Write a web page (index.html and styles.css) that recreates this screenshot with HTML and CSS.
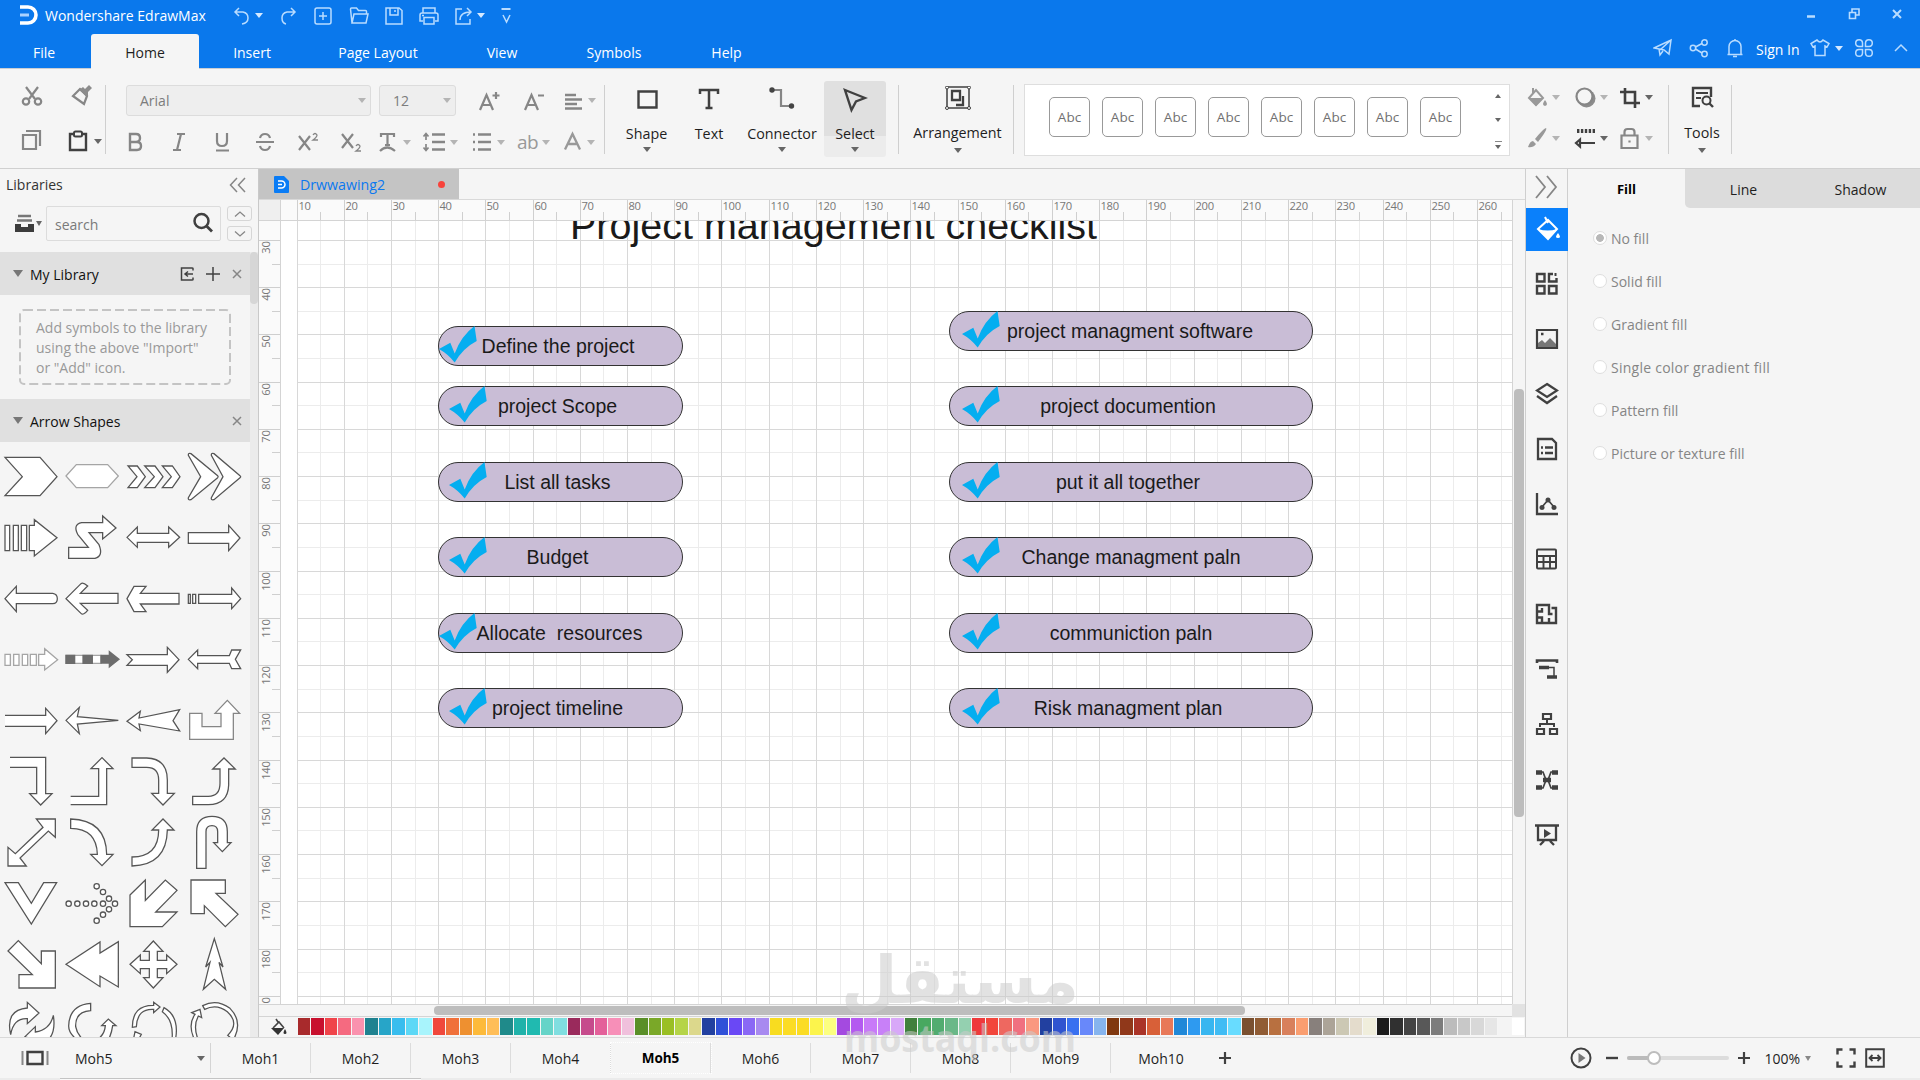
FILE: index.html
```
<!DOCTYPE html>
<html lang="en">
<head>
    <meta charset="utf-8">
    <title>Wondershare EdrawMax</title>
    <link rel="stylesheet" href="styles.css">
</head>
<body>
    <header class="titlebar">
        <div class="title-row">
            <div class="brand">
                <svg class="logo" width="18" height="20" viewBox="0 0 18 20"><path d="M0 2h8a8 8 0 0 1 0 16H0" stroke="#fff" stroke-width="3.6"/><path d="M0 10h9" stroke="#a9d2ff" stroke-width="3"/></svg>
                <span>Wondershare EdrawMax</span>
            </div>
            <div class="quick">
                <span class="drop"><svg width="20" height="20" viewBox="0 0 20 20"><path d="M7 2L3 6l4 4M3 6h8q5 1 5 6t-6 6"/></svg><i class="caret"></i></span>
                <svg width="20" height="20" viewBox="0 0 20 20"><path d="M13 2l4 4-4 4M17 6H9q-5 1-5 6t4 6"/></svg>
                <svg width="20" height="20" viewBox="0 0 20 20"><rect x="2" y="2" width="16" height="16" rx="2"/><path d="M10 6v8M6 10h8"/></svg>
                <svg width="20" height="20" viewBox="0 0 20 20"><path d="M3 17L1.500 3q0-1 1-1h5l2 2.500h7q1 0 1 1V8M3 17L5 8h14l-2 9z"/></svg>
                <svg width="20" height="20" viewBox="0 0 20 20"><path d="M2 2h13l3 2.500V18H2zM6 2v7h8V2M11 4v2"/></svg>
                <svg width="20" height="20" viewBox="0 0 20 20"><path d="M4 7V2h12v5M4 15H1V9q0-2 2-2h14q2 0 2 2v6h-3M5 11.500h10V18H5zM3 9.500h2"/></svg>
                <span class="drop"><svg width="20" height="20" viewBox="0 0 20 20"><path d="M8 3H2v15h14v-5M6 14q0-8 11-8M13 2l4 4-4 4"/></svg><i class="caret"></i></span>
                <svg class="customize" width="20" height="20" viewBox="0 0 20 20"><path d="M5.500 3h9" stroke-width="2"/><path d="M7 9l3.500 7L14 9"/></svg>
            </div>
            <div class="window-buttons">
                <svg width="12" height="12" viewBox="0 0 12 12"><path d="M2 8.500h8" stroke-width="2.500"/></svg>
                <svg width="12" height="12" viewBox="0 0 12 12"><path d="M1.500 4.500h6v6h-6zM4 4V1h7v6H8" stroke-width="1.600"/></svg>
                <svg width="12" height="12" viewBox="0 0 12 12"><path d="M2 2l8 8M10 2l-8 8" stroke-width="2"/></svg>
            </div>
        </div>
        <div class="menu-row">
            <nav class="menu">
                <a class="m-file">File</a><a class="m-home active">Home</a><a class="m-insert">Insert</a><a class="m-page">Page Layout</a><a class="m-view">View</a><a class="m-symbols">Symbols</a><a class="m-help">Help</a>
            </nav>
            <div class="account">
                <svg width="20" height="20" viewBox="0 0 20 20"><path d="M1 10L18 2l-2 14-5-4zM6 11l1 6 3-4M7 12l11-10"/></svg>
                <svg width="20" height="20" viewBox="0 0 20 20"><circle cx="4" cy="10" r="2.700"/><circle cx="15.500" cy="4.500" r="2.700"/><circle cx="15.500" cy="16" r="2.700"/><path d="M6.500 9L13 5.500M6.500 11L13 15"/></svg>
                <svg width="20" height="20" viewBox="0 0 20 20"><path d="M4 16V8.500a6 6 0 0 1 12 0V16M2.500 16.500h15M10 1v2M8 18.500h4"/></svg>
                <span>Sign In</span>
                <svg width="20" height="20" viewBox="0 0 20 20"><path d="M7 2L1 5.500 3 9l2-1v9.500h10V8l2 1 2-3.500L13 2q-3 4-6 0z"/></svg>
                <i class="caret"></i>
                <svg class="clover" width="20" height="20" viewBox="0 0 20 20"><path d="M8.500 8.500H5A3.400 3.400 0 1 1 8.500 5zM11.500 8.500V5A3.400 3.400 0 1 1 15 8.500zM8.500 11.500V15A3.400 3.400 0 1 1 5 11.500zM11.500 11.500H15A3.400 3.400 0 1 1 11.500 15z"/></svg>
                <svg class="collapse" width="14" height="14" viewBox="0 0 14 14"><path d="M1 10l6-6 6 6"/></svg>
            </div>
        </div>
    </header>

    <section class="ribbon">
        <div class="group clipboard">
            <svg class="gray" width="22" height="22" viewBox="0 0 22 22"><path d="M5 2l9 12M17 2L8 14"/><circle cx="5" cy="16.500" r="3.200"/><circle cx="17" cy="16.500" r="3.200"/></svg>
            <svg class="gray" width="22" height="22" viewBox="0 0 22 22"><path d="M2 11l7-7 7 7-3 8z"/><path d="M8 5l4-3 2 2 4-4 3 3-4 4v5z" fill="#8c8c8c" stroke="none"/></svg>
            <svg class="gray" width="22" height="22" viewBox="0 0 22 22"><path d="M2 6h13v14H2zM5 2h14v15"/></svg>
            <span class="drop"><svg class="dark" width="20" height="22" viewBox="0 0 20 22"><path d="M6 4H2v16h16V4h-4" stroke-width="2.400"/><rect x="6" y="1.500" width="8" height="5" rx="1.500"/></svg><i class="caret dk"></i></span>
        </div>
        <div class="group font">
            <div class="font-row">
                <div class="select family"><span>Arial</span><i class="caret"></i></div>
                <div class="select size"><span>12</span><i class="caret"></i></div>
                <svg class="gray" width="22" height="22" viewBox="0 0 22 22"><path d="M2 20L8.500 5 15 20M4.500 15h8M18 2v7M14.500 5.500h7" stroke-width="2.200"/></svg>
                <svg class="gray" width="22" height="22" viewBox="0 0 22 22"><path d="M2 20L8.500 5 15 20M4.500 15h8M15 5.500h6" stroke-width="2.200"/></svg>
                <span class="drop"><svg class="gray" width="20" height="22" viewBox="0 0 20 22"><path d="M2 5h11M2 9.500h17M2 14h12M2 18.500h17" stroke-width="2.400"/></svg><i class="caret"></i></span>
            </div>
            <div class="style-row">
                <svg class="gray" width="22" height="22" viewBox="0 0 22 22"><path d="M6 3h6q4 0 4 4t-4 4H6zM6 11h7q4 0 4 4t-4 4H6z" stroke-width="2.400"/></svg>
                <svg class="gray" width="22" height="22" viewBox="0 0 22 22"><path d="M9 3h8M5 19h8M13 3L9 19"/></svg>
                <svg class="gray" width="22" height="22" viewBox="0 0 22 22"><path d="M5 2v8q0 5 5 5t5-5V2M4 19.500h13"/></svg>
                <svg class="gray" width="22" height="22" viewBox="0 0 22 22"><path d="M15 7q-1-4-5-4T5 7M1 11h18M5 15q1 4 5 4t5-4"/></svg>
                <svg class="gray" width="22" height="22" viewBox="0 0 22 22"><path d="M2 5l11 14M13 5L2 19"/><path d="M16 4q2-3 4 0 0 2-4 5h5" stroke-width="1.300"/></svg>
                <svg class="gray" width="22" height="22" viewBox="0 0 22 22"><path d="M2 3l11 14M13 3L2 17"/><path d="M16 15q2-3 4 0 0 2-4 5h5" stroke-width="1.300"/></svg>
                <span class="drop"><svg class="gray" width="22" height="22" viewBox="0 0 22 22"><path d="M4 6V3h13v3M10.500 3v11M8 14h5M3 20q7-7 15 0"/></svg><i class="caret"></i></span>
                <span class="drop"><svg class="gray" width="24" height="22" viewBox="0 0 24 22"><path d="M4 3v6M4 13v6M1.500 5.500L4 2.500l2.500 3M1.500 16.500l2.500 3 2.500-3" stroke-width="1.700"/><path d="M10 3.500h13M10 11h13M10 18.500h13" stroke-width="2.400"/></svg><i class="caret"></i></span>
                <span class="drop"><svg class="gray" width="22" height="22" viewBox="0 0 22 22"><path d="M2 3.500h2M2 11h2M2 18.500h2M7 3.500h13M7 11h13M7 18.500h13" stroke-width="2.400"/></svg><i class="caret"></i></span>
                <span class="drop"><b class="ab">ab</b><i class="caret"></i></span>
                <span class="drop"><svg class="light" width="22" height="22" viewBox="0 0 22 22"><path d="M4 18.500L11.500 3 19 18.500M7 13h9" stroke-width="2.300"/></svg><i class="caret"></i></span>
            </div>
        </div>
        <div class="group modes">
            <div class="big shape"><svg class="dark" width="26" height="28" viewBox="0 0 26 28"><path d="M4.500 5.500h18v16h-18z" stroke-width="2.400"/></svg><span>Shape</span><i class="caret dk"></i></div>
            <div class="big text"><svg class="dark" width="26" height="28" viewBox="0 0 26 28"><path d="M4 8V4h18v4M13 4v18M9.500 22h7" stroke-width="2.500"/></svg><span>Text</span></div>
            <div class="big connector"><svg class="gray" width="26" height="28" viewBox="0 0 26 28"><path d="M3 4h9v16h9"/><circle cx="3" cy="4" r="2.700" fill="#444" stroke="none"/><circle cx="22.500" cy="20" r="2.700" fill="#444" stroke="none"/></svg><span>Connector</span><i class="caret dk"></i></div>
            <div class="big chosen"><svg class="dark" width="26" height="28" viewBox="0 0 26 28"><path d="M3 4l20 8-9 3.500L9.500 24z" stroke-width="2.400"/></svg><span>Select</span><i class="caret dk"></i></div>
        </div>
        <div class="group arrangement">
            <div class="big"><svg class="dark" width="26" height="28" viewBox="0 0 26 28"><path d="M2 1h22v21H2z" stroke-width="1.500"/><path d="M7 5h8v9H7zM18 10v9h-7" stroke-width="2.300"/><g fill="#fff" stroke-width="1"><circle cx="2" cy="1.500" r="1.500"/><circle cx="24" cy="1.500" r="1.500"/><circle cx="2" cy="22" r="1.500"/><circle cx="24" cy="22" r="1.500"/></g></svg><span>Arrangement</span><i class="caret dk"></i></div>
        </div>
        <div class="gallery">
            <div class="swatch">Abc</div><div class="swatch">Abc</div><div class="swatch">Abc</div><div class="swatch">Abc</div><div class="swatch">Abc</div><div class="swatch">Abc</div><div class="swatch">Abc</div><div class="swatch">Abc</div>
            <div class="gallery-nav"><i class="caret dk up"></i><i class="caret dk"></i><div class="more"><i class="caret dk"></i></div></div>
        </div>
        <div class="group effects">
            <span class="drop"><svg class="light" width="22" height="22" viewBox="0 0 22 22"><path d="M7 2v5M3 12l7-8 7 8-7 7z"/><path d="M3 12h14l-7 8zM19 14q4 5 0 6-4-1 0-6" fill="#999" stroke="none"/></svg><i class="caret"></i></span>
            <span class="drop"><svg class="gray" width="22" height="22" viewBox="0 0 22 22"><circle cx="12.500" cy="12.500" r="9" fill="#8c8c8c" stroke="none"/><circle cx="10.500" cy="10.500" r="8" fill="#f5f5f5"/></svg><i class="caret"></i></span>
            <span class="drop"><svg class="dark" width="22" height="22" viewBox="0 0 22 22"><path d="M6 2v15h15M1 6h15v16" stroke-width="2.600"/></svg><i class="caret dk"></i></span>
            <span class="drop"><svg class="light" width="22" height="22" viewBox="0 0 22 22"><path d="M20 1q2 1-8 14l-3-3Q17 2 20 1M7 14l3 3q-3 4-8 3 2-6 5-6" fill="#999" stroke="none"/></svg><i class="caret"></i></span>
            <span class="drop"><svg class="dark" width="22" height="22" viewBox="0 0 22 22"><path d="M3 4h18" stroke-width="4" stroke-dasharray="2.400 1.500"/><path d="M5 16h16M6 12.500L2 16l4 3.500z" stroke-width="2.200"/></svg><i class="caret dk"></i></span>
            <span class="drop"><svg class="gray" width="22" height="22" viewBox="0 0 22 22"><path d="M2.500 8.500h16V21h-16zM5.500 8V5q0-3 3-3h4q3 0 3 3v3M10.500 13.500v2"/></svg><i class="caret"></i></span>
        </div>
        <div class="group tools">
            <div class="big"><svg class="dark" width="26" height="28" viewBox="0 0 26 28"><path d="M11 20H4V2h18v9" stroke-width="2.400"/><path d="M7 7h12M7 12h5"/><circle cx="17.500" cy="14.500" r="4"/><path d="M20 17l4 4" stroke-width="2.400"/></svg><span>Tools</span><i class="caret dk"></i></div>
        </div>
    </section>

    <main class="workspace">
        <aside class="libraries">
            <div class="lib-title"><span>Libraries</span><svg class="gray" width="17" height="16" viewBox="0 0 17 16"><path d="M8 1L1.500 8 8 15M16 1L9.500 8l6.500 7" stroke-width="1.500"/></svg></div>
            <div class="lib-search">
                <span class="drop"><svg width="19" height="19" viewBox="0 0 19 19"><path d="M3 2h13M2 6.500h15" stroke="#777" stroke-width="2.500"/><path d="M0 10h6v3h7v-3h6v8H0z" fill="#3c3c3c"/></svg><i class="caret dk"></i></span>
                <div class="search-box"><span>search</span><svg class="dark" width="20" height="21" viewBox="0 0 20 21"><circle cx="8.500" cy="9" r="7" stroke-width="2.500"/><path d="M13.500 14l5.500 5.500" stroke-width="2.800"/></svg></div>
                <div class="steps">
                    <div><svg class="gray" width="12" height="6" viewBox="0 0 12 6"><path d="M1 5.500l5-4.500 5 4.500" stroke-width="1.300"/></svg></div>
                    <div><svg class="gray" width="12" height="6" viewBox="0 0 12 6"><path d="M1 .5L6 5 11 .5" stroke-width="1.300"/></svg></div>
                </div>
            </div>
            <div class="lib-scroll">
                <div class="lib-body">
                    <div class="lib-head"><i class="fold"></i><span>My Library</span>
                        <svg class="dark thin" width="14" height="14" viewBox="0 0 14 14"><path d="M13 3.500V1.500q0-.5-1-.5H1.500v12H12q1 0 1-.5v-2M13 7H5.500M8 4.500L5 7l3 2.500"/></svg>
                        <svg class="dark thin" width="14" height="14" viewBox="0 0 14 14"><path d="M7 0v14M0 7h14"/></svg>
                        <svg class="gray thin" width="10" height="10" viewBox="0 0 10 10"><path d="M1 1l8 8M9 1L1 9"/></svg>
                    </div>
                    <div class="lib-hint-wrap"><svg class="hint-frame" width="212" height="76"><rect x="1" y="1" width="210" height="74" rx="4"/></svg><p class="lib-hint">Add symbols to the library<br>using the above "Import"<br>or "Add" icon.</p></div>
                    <div class="lib-head"><i class="fold"></i><span>Arrow Shapes</span>
                        <svg class="gray thin" width="10" height="10" viewBox="0 0 10 10"><path d="M1 1l8 8M9 1L1 9"/></svg>
                    </div>
                    <div class="arrows">
                        <svg viewBox="0 48 183 183"><path d="M15 82H120L171 140 120 197H15L67 140z"/></svg>
                        <svg class="pale" viewBox="183 48 183 183"><path d="M198 138L229 104H323L355 138 323 173H229z"/></svg>
                        <svg viewBox="366 48 183 183"><path d="M384 108H412L436 140 412 173H384L411 140zM434 108h31l24 32-24 33h-31l29-33zM487 108h30l23 32-23 33h-30l27-33z"/></svg>
                        <svg viewBox="549 48 183 183"><path d="M565 76Q564 68 573 71L653 137Q656 140 653 143L573 209Q563 211 565 203L602 140zM634 76Q633 68 642 71L720 137Q724 140 720 143L642 209Q632 211 634 203L669 140z"/></svg>

                        <svg viewBox="0 231 183 183"><path d="M15 286h14v76h-14zM40 286h15v76h-15zM64 286h16v76h-16zM88 286h15v-17l68 54-68 55v-16h-15z"/></svg>
                        <svg viewBox="183 231 183 183"><path d="M206 352H265L233 313Q218 283 245 278H308V258L348 294 308 327V308H267L297 344Q311 378 285 385H206z"/></svg>
                        <svg viewBox="366 231 183 183"><path d="M381 322L412 291V310H506V291L539 322 506 352V337H412V352z"/></svg>
                        <svg viewBox="549 231 183 183"><path d="M565 308H686V286L720 324 686 362V340H565z"/></svg>

                        <svg viewBox="0 414 183 183"><path d="M15 506L49 469V490H158Q172 492 172 506 172 520 158 521H49V545z"/></svg>
                        <svg viewBox="183 414 183 183"><path d="M198 506L243 461Q249 456 263 468L241 490H354V520H241L263 541Q250 557 243 550z"/></svg>
                        <svg viewBox="366 414 183 183"><path d="M381 506L402 469H438L421 490H537V522H421L438 545H402z"/></svg>
                        <svg viewBox="549 414 183 183"><path d="M565 493h6v27h-6zM578 493h9v27h-9zM596 493h99v-19l27 32-27 30v-16h-99z"/></svg>

                        <svg class="pale" viewBox="0 597 183 183"><path d="M15 673h16v33h-16zM41 673h16v33h-16zM67 673h16v33h-16zM91 673h18v33h-18zM116 673h18v-17l39 33-39 31v-14h-18z"/></svg>
                        <svg class="pale" viewBox="183 597 183 183"><path d="M198 676h105v24h-105z"/><path class="solid" d="M198 676h26v24h-26zM249 676h28v24h-28zM303 676h25v-11l29 23-29 23v-12h-25z"/></svg>
                        <svg viewBox="366 597 183 183"><path d="M381 674H502V652L537 689 502 727V706H381L397 689z"/></svg>
                        <svg viewBox="549 597 183 183"><path d="M565 688L593 660V677H688L695 660H722L706 688 722 716H695L688 700H593V716z"/></svg>

                        <svg viewBox="0 780 183 183"><path d="M15 856H137V835L171 872 137 911V889H15"/></svg>
                        <svg viewBox="183 780 183 183"><path d="M198 871L238 832 232 860 355 871 232 882 238 911z"/></svg>
                        <svg viewBox="366 780 183 183"><path d="M381 874L421 844 417 864 539 839 519 872 539 903 417 882 421 902z"/></svg>
                        <svg class="mid" viewBox="549 780 183 183"><path d="M569 850H606V890H663V850H645L682 811 719 850H700V928H569z"/></svg>

                        <svg viewBox="0 33 183 183"><path d="M30 52H137V161H156L122 195 89 161H110V82H30"/></svg>
                        <svg viewBox="183 33 183 183"><path d="M212 169H296V86H273L306 53 339 86H320V194H212"/></svg>
                        <svg viewBox="366 33 183 183"><path d="M396 54H440Q502 56 502 120V160H523L489 195 455 160H476V120Q476 82 440 82H396z"/></svg>
                        <svg viewBox="549 33 183 183"><path d="M578 169H625Q660 169 660 130V87H638L672 54 706 87H686V135Q684 194 625 194H578z"/></svg>

                        <svg viewBox="0 216 183 183"><path d="M109 237H166V292L145 273 60 354 79 378H24V322L46 341 129 262z"/></svg>
                        <svg viewBox="183 216 183 183"><path d="M212 237Q318 240 320 343H339L306 377 272 343H292Q290 266 212 265z"/></svg>
                        <svg viewBox="366 216 183 183"><path d="M396 351Q476 350 476 270H456L489 237 522 270H502Q500 375 396 378z"/></svg>
                        <svg viewBox="549 216 183 183"><path d="M590 385V275Q590 229 636 229 682 229 682 275V308H693L667 335 641 308H653V275Q653 257 636 257 618 257 618 275V385z"/></svg>

                        <svg viewBox="0 399 183 183"><path d="M15 428H55L94 490 131 428H170L94 552z"/></svg>
                        <svg viewBox="183 399 183 183"><circle cx="206" cy="491" r="8"/><circle cx="232" cy="491" r="8"/><circle cx="258" cy="491" r="8"/><circle cx="283" cy="491" r="8"/><circle cx="309" cy="491" r="8"/><circle cx="345" cy="491" r="8"/><circle cx="290" cy="439" r="8"/><circle cx="309" cy="456" r="8"/><circle cx="327" cy="476" r="8"/><circle cx="327" cy="508" r="8"/><circle cx="309" cy="524" r="8"/><circle cx="290" cy="542" r="8"/></svg>
                        <svg viewBox="366 399 183 183"><path d="M390 465L436 420V481L496 420 531 451 467 516H531L487 560H390z"/></svg>
                        <svg viewBox="549 399 183 183"><path d="M573 420H676V460H648L714 523 676 560 613 497V521H573z"/></svg>

                        <svg viewBox="0 582 183 183"><path d="M24 633L55 602 124 671V633H166V744H57V704H97z"/></svg>
                        <svg viewBox="183 582 183 183"><path d="M198 673L300 606V639L355 605V741L300 708V740z"/></svg>
                        <svg viewBox="366 582 183 183"><path d="M460 603L489 634H472V661H500V645L531 673 500 701V686H472V713H489L460 744 431 713H448V686H421V701L390 673 421 645V661H448V634H431z"/></svg>
                        <svg viewBox="549 582 183 183"><path d="M643 596L669 681 657 667 677 748 643 718 610 748 630 667 617 681z"/></svg>

                        <svg viewBox="0 765 183 183"><path d="M32 884Q15 810 82 804V787L117 819 82 851V836Q40 834 32 884zM75 890L106 860V876Q150 870 160 826Q170 890 130 910z"/></svg>
                        <svg viewBox="183 765 183 183"><path d="M272 790V812Q225 815 227 860Q230 880 250 900H232Q206 880 206 858Q208 795 272 790zM290 900Q314 885 316 857H305L325 837 348 857H338Q335 880 325 900z"/></svg>
                        <svg viewBox="366 765 183 183"><path d="M397 862Q397 795 461 796V787L480 801 461 818V808Q412 805 409 860zM492 803Q540 830 526 900H516Q522 840 487 815zM400 900L405 875 424 883 415 900z"/></svg>
                        <svg viewBox="549 765 183 183"><path d="M608 797Q650 775 690 805Q730 845 700 900L683 886Q720 850 682 815Q650 790 614 808zM584 900Q562 855 585 823L575 818 600 808 605 833 595 828Q578 860 595 900z"/></svg>
                    </div>
                </div>
                <div class="lib-track"><div class="lib-thumb"></div></div>
            </div>
        </aside>

        <section class="document">
            <div class="doc-tabs"><div class="doc-tab">
                <svg width="15" height="17" viewBox="0 0 15 17"><path d="M1 0h9l5 5v11q0 1-1 1H1q-1 0-1-1V1q0-1 1-1z" fill="#0a7cf5"/><path d="M4 5h3.500a3.500 3.500 0 0 1 0 7H4M4 8.500h4" fill="none" stroke="#fff" stroke-width="1.500"/></svg>
                <span>Drwwawing2</span><i class="unsaved"></i></div></div>
            <div class="sheet">
                <div class="ruler-corner"></div>
                <svg class="ruler-h" id="ruler-h" width="1231" height="20"></svg>
                <svg class="ruler-v" id="ruler-v" width="21" height="783"></svg>
                <div class="canvas">
                    <svg class="grid" id="grid" width="1231" height="783"></svg>
                    <div class="page-title">Project management checklist</div>
                    <div id="nodes"></div>
                </div>
                <div class="vscroll"><div class="vthumb"></div></div>
                <div class="hscroll"><div class="hthumb"></div></div>
                <div class="scroll-corner"></div>
            </div>
            <div class="palette">
                <div class="palette-icon"><svg width="16" height="18" viewBox="0 0 16 18"><path d="M5 1l2 3M2 10l6-6 5 6" stroke="#444" stroke-width="1.600" fill="none"/><path d="M0 10h13l-6 7zM14 11q3 5 0 5t0-5" fill="#333"/></svg></div>
                <div class="colors" id="colors"></div>
            </div>
        </section>

        <nav class="side-strip">
            <div class="strip-top"><svg class="gray" width="24" height="24" viewBox="0 0 24 24"><path d="M2 1l9 11-9 11M13 1l9 11-9 11" stroke-width="1.800"/></svg></div>
            <div class="strip-active"><svg width="24" height="26" viewBox="0 0 24 26"><path d="M9 2l3 6M2 14l10-9 9 9-9 10z" fill="none" stroke="#fff" stroke-width="2"/><path d="M2 14q10 3 19 0l-9 10zM22 18q4 5 0 5t0-5" fill="#fff"/></svg></div>
            <div class="strip-item"><svg class="dark" width="24" height="24" viewBox="0 0 24 24"><path d="M2 2h7.500v7.500H2zM2 14h7.500v7.500H2zM14 14h7.500v7.500H14zM18 2h-4v7.500h7.500V6" stroke-width="2.400"/><path d="M20.500 1v3" stroke-width="2"/></svg></div>
            <div class="strip-item"><svg class="dark" width="24" height="24" viewBox="0 0 24 24"><path d="M2 3h20v18H2z" stroke-width="2.200"/><path d="M3 20v-4l4-3 3 3 5-5 6 6v3z" fill="#777" stroke="none"/><path d="M6 7h2.500" stroke-width="2.500"/></svg></div>
            <div class="strip-item"><svg class="dark" width="24" height="24" viewBox="0 0 24 24"><path d="M12 2l10 6.500L12 15 2 8.500zM2 14l10 7 10-7" stroke-width="2.300"/></svg></div>
            <div class="strip-item"><svg class="dark" width="24" height="24" viewBox="0 0 24 24"><path d="M3 2h14l4 4v16H3zM10 10.500h8M10 16h8M6 10.500h2M6 16h2" stroke-width="2.300"/></svg></div>
            <div class="strip-item"><svg class="dark" width="24" height="24" viewBox="0 0 24 24"><path d="M2 1v21h21" stroke-width="2.300"/><path d="M7 15l6-7 6 7" stroke-width="1.700"/><g fill="#444" stroke="none"><circle cx="7" cy="15.500" r="2.500"/><circle cx="13" cy="8" r="2.500"/><circle cx="19" cy="15.500" r="2.500"/></g></svg></div>
            <div class="strip-item"><svg class="dark" width="24" height="24" viewBox="0 0 24 24"><rect x="2" y="1.500" width="19" height="19" rx="1"/><path d="M2 8h19M2 14h19M8.500 8v12M15 8v12" stroke-width="1.900"/></svg></div>
            <div class="strip-item"><svg class="dark" width="24" height="24" viewBox="0 0 24 24"><path d="M14 7V2H2v18h19V5h-4.500M2 8.500h5V5M14 7v4h3.500M14 20v-5M7 20v-5.500H2" stroke-width="2.400"/></svg></div>
            <div class="strip-item"><svg class="dark" width="24" height="24" viewBox="0 0 24 24"><path d="M2 5V2.500h20V5" stroke-width="2.600"/><path d="M4 9.500h10M12 19h10" stroke-width="3.600"/><path d="M14 9.500h5V18" stroke-width="1.500"/></svg></div>
            <div class="strip-item"><svg class="dark" width="24" height="24" viewBox="0 0 24 24"><path d="M8 1h8v5H8zM2 16h7v5H2zM15 16h7v5h-7z" stroke-width="2.200"/><path d="M12 6v5M5 14v-3h14v3" stroke-width="2"/></svg></div>
            <div class="strip-item"><svg class="dark" width="24" height="24" viewBox="0 0 24 24"><path d="M5 4h3l3 8-3 8H5M19 4h-3l-3 8 3 8h3" stroke-width="1.700"/><path d="M1 4.500h6M1 19.500h6M17 4.500h6M17 19.500h6M8 12h8" stroke-width="4.500"/></svg></div>
            <div class="strip-item"><svg class="dark" width="26" height="24" viewBox="0 0 26 24"><path d="M0 2.500h24M3 3v14h18V3M9 18l-4 4M15 18l4 4" stroke-width="2.300"/><path d="M9 6l7 4.500-7 4.500z" fill="#444" stroke="none"/></svg></div>
        </nav>

        <aside class="props">
            <div class="prop-tabs"><div class="prop-tab on">Fill</div><div class="prop-rest"><div class="prop-tab">Line</div><div class="prop-tab">Shadow</div></div></div>
            <div class="fills">
                <label class="checked"><i></i>No fill</label>
                <label><i></i>Solid fill</label>
                <label><i></i>Gradient fill</label>
                <label class="wide"><i></i>Single color gradient fill</label>
                <label><i></i>Pattern fill</label>
                <label><i></i>Picture or texture fill</label>
            </div>
        </aside>
    </main>

    <footer class="statusbar">
        <div class="page-picker">
            <svg class="dark" width="28" height="18" viewBox="0 0 28 18"><path d="M6.500 3h15v12h-15z" stroke-width="2.400"/><path d="M1.500 2v14M26.500 2v14" stroke="#888"/></svg>
            <span>Moh5</span><i class="caret dk"></i>
        </div>
        <div class="page-tabs">
            <span>Moh1</span><span>Moh2</span><span>Moh3</span><span>Moh4</span><span class="current">Moh5</span><span>Moh6</span><span>Moh7</span><span>Moh8</span><span>Moh9</span><span>Moh10</span>
        </div>
        <svg class="dark add-page" width="14" height="14" viewBox="0 0 14 14"><path d="M7 1v12M1 7h12" stroke-width="2.200"/></svg>
        <div class="zoom">
            <svg class="dark" width="22" height="22" viewBox="0 0 22 22"><circle cx="11" cy="11" r="9.500"/><path d="M8.500 6l7 5-7 5z" fill="#777" stroke="none"/></svg>
            <svg class="dark z-minus" width="14" height="14" viewBox="0 0 14 14"><path d="M1 7h12" stroke-width="2.400"/></svg>
            <div class="slider"><div class="slider-fill"></div><div class="knob"></div></div>
            <svg class="dark z-plus" width="14" height="14" viewBox="0 0 14 14"><path d="M7 1v12M1 7h12" stroke-width="2.200"/></svg>
            <span>100%</span><i class="caret"></i>
            <svg class="dark fit" width="20" height="20" viewBox="0 0 20 20"><path d="M1.500 6.500v-5h5M13.500 1.500h5v5M18.500 13.500v5h-5M6.500 18.500h-5v-5" stroke-width="2.400"/></svg>
            <svg class="dark" width="20" height="20" viewBox="0 0 20 20"><path d="M1.200 1.200h17.600v17.600H1.200z" stroke-width="2"/><path d="M5 10h10M7.500 7L4.500 10l3 3M12.500 7l3 3-3 3" stroke-width="1.800"/></svg>
        </div>
    </footer>
    <div class="bottom-edge"><div></div></div>

    <svg class="watermark" width="240" height="120" viewBox="0 0 240 120">
        <text class="wm-ar" x="120" y="60" text-anchor="middle" textLength="238" lengthAdjust="spacingAndGlyphs">مستقل</text>
        <text class="wm-en" x="4" y="109" textLength="232" lengthAdjust="spacingAndGlyphs">mostaql.com</text>
    </svg>

    <script>
        // 10 ruler units are 47.24px; the page starts at x = 16 and the "30" line at y = 19
        const step = 47.24;
        let grid = '', rulerH = '', rulerV = '';
        const minor = [], major = [];

        for (let i = 0; i < 53; i++) {
            const x = Math.floor(16 + i * step / 2 - i * 0.01) + 0.5;
            if (x > 1231) break;
            (i % 2 ? minor : major).push(`M${x} 0V783`);
            rulerH += `<path d="M${x} ${i % 2 ? 12 : 0}V20"/>`;
            if (i % 2 == 0) rulerH += `<text x="${x + 1}" y="9.5">${10 + i * 5}</text>`;
        }
        for (let i = 0; i < 34; i++) {
            const y = Math.floor(19.4 + i * step / 2) + 0.5;
            if (y > 783) break;
            (i % 2 ? minor : major).push(`M16 ${y}H1231`);
            rulerV += `<path d="M${i % 2 ? 13 : 0} ${y}H21"/>`;
            if (i % 2 == 0) rulerV += `<text transform="translate(10.5 ${y + 1}) rotate(-90)" text-anchor="end">${30 + i * 5}</text>`;
        }
        grid = `<path class="minor" d="${minor.join('')}"/><path class="major" d="${major.join('')}"/>`;
        document.getElementById('grid').innerHTML = grid;
        document.getElementById('ruler-h').innerHTML = rulerH;
        document.getElementById('ruler-v').innerHTML = rulerV;

        // [column, top, text, text shift, check mark offset]
        const nodes = [
            ['left', 105, 'Define the project', -2.5, 0],
            ['left', 165, 'project Scope', -3, 10],
            ['left', 241, 'List all tasks', -3, 10],
            ['left', 316, 'Budget', -3, 10],
            ['left', 392, 'Allocate  resources', -1, 0],
            ['left', 467, 'project timeline', -3, 10],
            ['right', 90, 'project managment software', -1, 12],
            ['right', 165, 'project documention', -3, 12],
            ['right', 241, 'put it all together', -3, 12],
            ['right', 316, 'Change managment paln', 0, 12],
            ['right', 392, 'communiction paln', 0, 12],
            ['right', 467, 'Risk managment plan', -3, 12]
        ];
        document.getElementById('nodes').innerHTML = nodes.map(n => `
            <div class="node ${n[0]}" style="top:${n[1]}px">
                <svg class="check" style="left:${n[4]}px" width="38" height="37" viewBox="0 0 38 37"><path d="M0 23L11.300 16.700 15.700 27.500Q22 10 35.500 0L37.700 15Q24 22 15.700 36.500Q9 28 0 23z"/></svg>
                <span style="margin-left:${n[3] * 2}px">${n[2]}</span>
            </div>`).join('');

        const colors = ('a82a2c c8102e f0444a f56a80 fa92ae 1f8290 27a5c8 38bdee 5cd8f6 a8f4fc f0483c f0703a ee9030 fdba3a ffbe58 ' +
            '1f8a8a 20b2aa 20bab0 66d4c8 80dee0 9a2a5c c64b8c e4609a f78fb8 f0c0dc 5a8f28 7aa828 9abf24 b5d448 dcd88c ' +
            '2240a0 3050d8 6a48f5 8a68f5 a88af0 f8dc20 fbdc24 fbdc24 fcf44c fcff80 a44ae0 b45af0 c87af8 c880f8 d8a8f8 ' +
            '40803c 48a860 52ac70 6ab888 94d0b0 ee3a3c f2463c ee6860 f07080 fa9880 2240a0 3054d0 3870f0 6888fa 86b4ee ' +
            '80380f 90381a aa3428 d86038 e87858 2088d8 2e9af0 38b6f0 40bcf4 68dcff 7a5030 905c34 b87040 d8805c fa9e70 ' +
            '88807c aca498 ccc8b4 e4dccc f0eedc 1c1c1c 303030 444444 585858 7c7c7c bcbcbc c8c8c8 d8d8d8 e6e6e6 f4f4f4 ffffff').split(' ');
        document.getElementById('colors').innerHTML = colors.map(c => `<i style="background:#${c}"></i>`).join('');
    </script>
</body>
</html>
```
FILE: styles.css
```
* { box-sizing: border-box; }
body { margin: 0; width: 1920px; height: 1080px; overflow: hidden; background: #f5f5f5; font: 14px "Open Sans", "Noto Sans", sans-serif; color: #1e1e1e; display: flex; flex-direction: column; position: relative; }
svg { flex: none; display: block; fill: none; }
span { white-space: nowrap; }

.gray { stroke: #868686; stroke-width: 2.2; }
.light { stroke: #999; stroke-width: 2; }
.dark { stroke: #404040; stroke-width: 2; }
.thin { stroke-width: 1.5; }
.caret { flex: none; width: 0; height: 0; border: 4.500px solid transparent; border-top: 5px solid #b4b4b4; border-bottom: 0; }
.caret.dk { border-top-color: #666; }
.drop { display: flex; align-items: center; gap: 3px; }

/* title bar */
.titlebar { height: 69px; background: #0a78ec; border-bottom: 1px solid #c9ced4; color: #fff; }
.titlebar svg { stroke: #b9dcff; stroke-width: 1.5; }
.titlebar .caret { border-top-color: #d5e9ff; }
.title-row { height: 34px; display: flex; align-items: flex-start; padding: 4px 17px 0 20px; }
.brand { width: 212px; display: flex; gap: 7px; align-items: center; height: 22px; }
.quick { display: flex; gap: 15.200px; height: 23px; align-items: center; }
.customize { margin-left: -4px; }
.window-buttons { margin-left: auto; display: flex; gap: 31px; padding-top: 4px; }
.menu-row { display: flex; height: 34px; }
.menu { display: flex; }
.menu a { display: flex; align-items: center; justify-content: center; padding-top: 2px; height: 34px; }
.menu .active { background: #f5f5f5; color: #1e1e1e; border-radius: 3px 3px 0 0; height: 35px; }
.m-file { width: 88px; margin-right: 3px; }
.m-home { width: 108px; }
.m-insert { width: 106px; }
.m-page { width: 146px; }
.m-view { width: 102px; }
.m-symbols { width: 122px; }
.m-help { width: 103px; }
.account { margin-left: auto; display: flex; align-items: center; height: 28px; padding-right: 12px; }
.account svg { margin-right: 16px; }
.account svg:nth-child(3) { margin-right: 11px; }
.account span { width: 54px; padding-top: 3px; }
.account svg:nth-of-type(4) { margin-right: 5px; }
.account .clover { margin: 0 20px 0 11px; }
.account .collapse { margin: 0; }

/* ribbon */
.ribbon { height: 100px; border-bottom: 1px solid #d0d0d0; display: flex; }
.group { height: 69px; margin-top: 16px; border-right: 1px solid #cfcfcf; }
.clipboard { width: 106px; display: grid; grid-template-columns: 50px 50px; grid-template-rows: 24px 24px; row-gap: 20px; padding-left: 21px; }
.clipboard .drop { margin-left: -3px; }
.clipboard .drop .caret { margin-left: 3px; }
.font { width: 499px; }
.font-row { display: flex; align-items: center; height: 31px; padding-left: 20px; }
.select { height: 31px; border: 1px solid #dcdcdc; border-radius: 3px; background: #eee; color: #7c7c7c; display: flex; align-items: center; justify-content: space-between; padding: 0 4px 0 13px; }
.family { width: 245px; margin-right: 8px; }
.size { width: 77px; margin-right: 22px; }
.font-row > svg { margin-right: 23px; }
.font-row > .drop { margin-left: -5px; gap: 5px; }
.style-row { display: grid; grid-template-columns: 44px 44px 43px 43px 42px 43px 45px 49px 46px 44px 46px; margin: 14px 0 0 7px; align-items: center; height: 24px; }
.style-row > svg { justify-self: center; }
.style-row .drop { padding-left: 5px; gap: 4px; }
.ab { font: 19px "Open Sans", sans-serif; line-height: 20px; color: #999; width: 21px; letter-spacing: -.5px; }
.big { display: flex; flex-direction: column; align-items: center; height: 76px; margin-top: -4px; padding-top: 5px; font-size: 14.300px; }
.big svg { margin-bottom: 9px; }
.big span { line-height: 22px; margin-bottom: 2px; }
.modes { display: flex; width: 294px; }
.shape { width: 83px; }
.text { width: 42px; }
.connector { width: 104px; }
.chosen { width: 62px; margin-left: -10px; background: linear-gradient(#e0e0e0 55px, #ececec 55px); border-radius: 3px; }
.arrangement { width: 115px; padding-left: 3px; }
.arrangement .big, .tools .big { margin-top: -4px; }
.arrangement .big span, .tools .big span { margin-top: -1px; margin-bottom: 4px; }
.gallery { width: 486px; height: 72px; margin: 15px 0 0 10px; background: #fff; border: 1px solid #dedede; display: flex; gap: 12px; padding: 12px 7px 0 24px; }
.swatch { flex: none; width: 41px; height: 40px; border: 1px solid #999; border-radius: 5px; color: #707070; display: flex; align-items: center; justify-content: center; font-size: 13.500px; }
.gallery-nav { margin-left: auto; display: flex; flex-direction: column; gap: 20px; margin-top: -3px; }
.gallery-nav .caret { display: block; border-width: 4px 3.500px 0; }
.gallery-nav .up { transform: rotate(180deg); }
.gallery-nav .more { border-top: 1.500px solid #888; padding-top: 3px; width: 7px; margin-top: -1px; }
.effects { width: 159px; display: grid; grid-template-columns: 48px 45px 43px; row-gap: 17px; grid-template-rows: 24px 24px; padding-left: 16px; }
.effects .drop { gap: 4px; }
.tools { width: 63px; padding-left: 4px; }

/* left panel */
.workspace { height: 868px; display: flex; }
.libraries { width: 259px; border-right: 1px solid #c9c9c9; display: flex; flex-direction: column; }
.lib-title { height: 37px; padding: 0 12px 6px 6px; display: flex; align-items: center; justify-content: space-between; color: #333; }
.lib-search { display: flex; height: 46px; padding-left: 15px; }
.lib-search .drop { height: 35px; gap: 2px; width: 31px; }
.lib-search .caret { border-width: 5px 3.500px 0; }
.search-box { width: 175px; height: 35px; border: 1px solid #dcdcdc; border-radius: 2px; display: flex; align-items: center; justify-content: space-between; padding: 0 7px 3px 8px; color: #7a7a7a; }
.search-box span { padding-top: 4px; }
.steps { display: flex; flex-direction: column; gap: 5px; margin-left: 6px; }
.steps div { width: 25px; height: 15px; border: 1px solid #d6d6d6; border-radius: 3px; display: flex; align-items: center; justify-content: center; }
.lib-scroll { display: flex; flex: 1; min-height: 0; }
.lib-body { width: 250px; overflow: hidden; height: 785px; }
.lib-head { height: 43px; background: #e0e0e0; display: flex; align-items: center; padding: 0 8px 0 13px; gap: 12px; color: #111; }
.lib-head span { margin-right: auto; padding-top: 1px; margin-left: -5px; }
.fold { border: 5px solid transparent; border-top: 7px solid #777; border-bottom: 0; }
.lib-hint-wrap { height: 104px; padding: 14px 0 0 19px; display: grid; }
.hint-frame { grid-area: 1 / 1; stroke: #c4c4c4; stroke-width: 2; stroke-dasharray: 9 4; }
.lib-hint { grid-area: 1 / 1; margin: 9px 0 0 17px; color: #999; line-height: 20px; font-size: 14px; }
.lib-track { width: 8px; background: #ebebeb; }
.lib-thumb { height: 52px; background: #d6d6d6; border-radius: 4px; }
.arrows { display: grid; grid-template-columns: repeat(4, 61px); padding-top: 4px; }
.arrows svg { width: 61px; height: 61px; fill: #fff; stroke: #555; stroke-width: 3.8; }
.arrows .pale { stroke: #a5a5a5; }
.arrows .mid { stroke: #858585; }
.arrows .solid { fill: #6c6c6c; stroke: #6c6c6c; }

/* document */
.document { width: 1266px; display: flex; flex-direction: column; }
.doc-tabs { height: 31px; border-bottom: 1px solid #d9d9d9; }
.doc-tab { width: 200px; height: 30px; background: #c4c4c4; color: #0a78f0; display: flex; align-items: center; padding: 0 14px 0 15px; gap: 11px; font-size: 14.200px; }
.unsaved { width: 7px; height: 7px; border-radius: 50%; background: #f8433b; margin-left: auto; }
.sheet { display: grid; grid-template-columns: 22px 1231px 13px; grid-template-rows: 21px 783px 13px; }
.ruler-corner { background: #efefef; border-right: 1px solid #d4d4d4; border-bottom: 1px solid #d4d4d4; }
.ruler-h, .ruler-v { background: #fafafa; stroke: #cfcfcf; border: 0 solid #d4d4d4; box-sizing: content-box; }
.ruler-h { border-bottom-width: 1px; }
.ruler-v { grid-area: 2 / 1; border-right-width: 1px; }
.ruler-h text, .ruler-v text { font-size: 11.200px; fill: #777; stroke: none; letter-spacing: -.3px; }
.canvas { grid-area: 2 / 2; position: relative; overflow: hidden; background: #fff; }
.grid .minor { stroke: #ececec; }
.grid .major { stroke: #d8d8d8; }
.page-title { position: absolute; left: 289px; top: -18px; font: 39.500px/44px "Liberation Sans", Arial, sans-serif; white-space: nowrap; color: #1a1a1a; }
.node { position: absolute; height: 40px; border: 1px solid #333; border-radius: 20px; background: #c9bdd6; display: flex; align-items: center; justify-content: center; font: 19.500px "Liberation Sans", Arial, sans-serif; color: #1a1a1a; }
.node span { white-space: pre; }
.node.left { left: 157px; width: 245px; }
.node.right { left: 668px; width: 364px; }
.check { position: absolute; top: -1px; fill: #04aef0; }
.vscroll { grid-area: 1 / 3 / 3 / 4; border-left: 1px solid #d4d4d4; padding: 189px 0 0 1px; }
.vthumb { width: 10px; height: 428px; border-radius: 4px; background: #bdbdbd; }
.hscroll { grid-area: 3 / 1 / 4 / 3; border-top: 1px solid #d4d4d4; border-bottom: 1px solid #d4d4d4; padding: 1px 0 0 175px; }
.hthumb { width: 811px; height: 9px; border-radius: 4px; background: #bdbdbd; }
.scroll-corner { grid-area: 3 / 3; background: #e2e2e2; }
.palette { height: 20px; display: flex; padding-top: 1px; }
.palette-icon { width: 39px; padding-left: 12px; }
.colors { display: flex; height: 17px; }
.colors i { width: 13.490px; border-right: 1px solid #f5f5f5; }

/* right side */
.side-strip { width: 43px; border: 1px solid #cfcfcf; border-width: 0 1px; }
.strip-top { height: 39px; padding: 6px 0 0 8px; }
.strip-active { width: 42px; height: 43px; margin-bottom: 5px; padding: 7px 0 0 10px; background: #0a80fb; }
.strip-item { height: 55.200px; display: flex; align-items: center; padding-left: 9px; }
.props { width: 352px; }
.prop-tabs { display: flex; height: 39px; }
.prop-tab { width: 117px; display: flex; align-items: center; justify-content: center; padding-top: 2px; }
.prop-tab.on { font-weight: 700; color: #000; padding-top: 0; font-size: 13px; }
.prop-rest { display: flex; flex: 1; background: #dcdcdc; border-radius: 0 0 0 5px; }
.fills { padding: 9px 0 0 25px; }
.fills label { display: flex; align-items: center; height: 43px; gap: 4px; color: #858585; font-size: 14px; }
.fills .wide { letter-spacing: .25px; }
.fills i { width: 14px; height: 14px; border-radius: 50%; background: #fff; border: 1px solid #dedede; margin-bottom: 2px; }
.fills .checked i { background: radial-gradient(#b8b8b8 3.500px, #fff 4.200px); }

/* status bar */
.statusbar { height: 41px; border-top: 1px solid #d9d9d9; display: flex; align-items: center; }
.page-picker { width: 211px; height: 30px; border-right: 1px solid #d4d4d4; display: flex; align-items: center; padding: 0 5px 0 21px; }
.page-picker span { margin: 1px auto 0 26px; }
.page-tabs { display: flex; }
.page-tabs span { width: 100px; height: 30px; border-right: 1px solid #dcdcdc; display: flex; align-items: center; justify-content: center; }
.page-tabs span:last-child { border: 0; }
.page-tabs .current { font-weight: 700; color: #000; outline: 1px dotted #fff; font-size: 13.500px; }
.add-page { margin-left: 7px; }
.zoom { margin-left: auto; display: flex; align-items: center; padding-right: 35px; }
.z-minus { margin: 0 8px 0 13px; }
.z-plus { margin: 0 13px 0 8px; }
.slider { width: 102px; height: 4px; border-radius: 2px; background: #dcdcdc; position: relative; }
.slider-fill { width: 27px; height: 4px; border-radius: 2px; background: #bbb; }
.knob { position: absolute; left: 20px; top: -5px; width: 14px; height: 14px; border-radius: 50%; background: #fff; border: 2px solid #bdbdbd; }
.zoom .caret { margin: 0 25px 0 5px; border-top-color: #888; border-left-width: 3.500px; border-right-width: 3.500px; }
.fit { margin-right: 9px; }
.bottom-edge { height: 2px; background: #ebebeb; padding-left: 60px; }
.bottom-edge div { width: 361px; height: 2px; background: #fafafa; border-top: 1px solid #c4c4c4; }

.watermark { position: absolute; left: 840px; top: 943px; opacity: .55; }
.wm-ar { font: 700 66px "DejaVu Sans", sans-serif; fill: #ccc; }
.wm-en { font: 700 38px "Open Sans", sans-serif; fill: #ccc; }
```
